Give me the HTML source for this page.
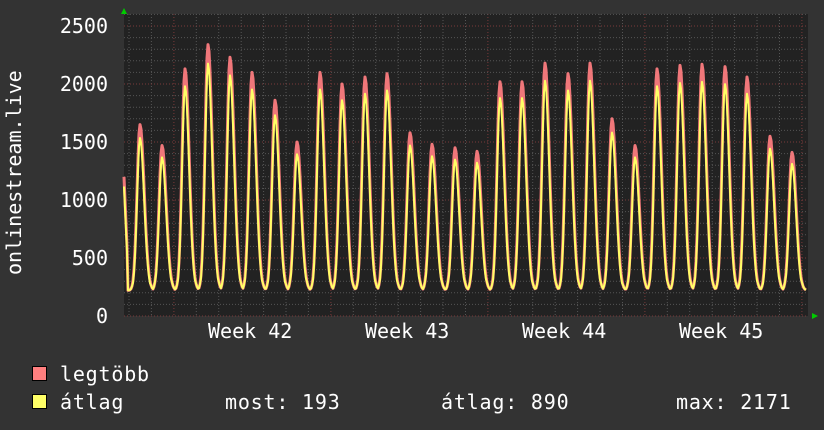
<!DOCTYPE html><html><head><style>
body{margin:0;background:#333;width:824px;height:430px;overflow:hidden;font-family:"DejaVu Sans Mono","Liberation Mono",monospace;color:#fff}
.t{position:absolute;font-size:20px;white-space:pre;line-height:20px}
.l{letter-spacing:0.8px}
.y{right:716px;text-align:right}
.sq{position:absolute;width:13px;height:13px;left:32px;border:1px solid #000}
</style></head><body>
<svg id="g" width="824" height="430" style="position:absolute;left:0;top:0">
<rect x="124" y="14" width="684" height="302" fill="#222"/>
<g id="grid"></g>
<path id="mx" fill="none" stroke="#f0777a" stroke-width="3" stroke-linejoin="round"/>
<path id="av" fill="none" stroke="#ffff66" stroke-width="2" stroke-linejoin="round"/>
<polygon points="121,14 127,14 124,8" fill="#0c0"/>
<polygon points="812,313 812,319 818,316" fill="#0c0"/>
</svg>
<div class="t y" style="top:16px">2500</div>
<div class="t y" style="top:74px">2000</div>
<div class="t y" style="top:132px">1500</div>
<div class="t y" style="top:190px">1000</div>
<div class="t y" style="top:248px">500</div>
<div class="t y" style="top:306px">0</div>
<div class="t" style="left:4px;top:275px;transform:rotate(-90deg);transform-origin:0 0;left:4px">onlinestream.live</div>
<div class="t" style="left:208px;top:321px">Week 42</div>
<div class="t" style="left:365px;top:321px">Week 43</div>
<div class="t" style="left:522px;top:321px">Week 44</div>
<div class="t" style="left:679px;top:321px">Week 45</div>
<div class="sq" style="top:366px;background:#ff7f7f"></div>
<div class="sq" style="top:394px;background:#ffff66"></div>
<div class="t l" style="left:60px;top:364px">legtöbb</div>
<div class="t l" style="left:60px;top:392px">átlag</div>
<div class="t l" style="left:225px;top:392px">most: 193</div>
<div class="t l" style="left:441px;top:392px">átlag: 890</div>
<div class="t l" style="left:676px;top:392px">max: 2171</div>
<script>
var g=document.getElementById('grid'),s='';
for(var x=129;x<808;x+=22.43){var r=((x-174)%157+157)%157;var maj=r<2||r>155;
s+='<line x1="'+x.toFixed(1)+'" y1="14" x2="'+x.toFixed(1)+'" y2="316" stroke="'+(maj?'#7a3a3a':'#555')+'" stroke-dasharray="1,2"/>';}
for(var v=0;v<=2600;v+=100){var y=316-v*0.116;if(y<14)break;var m=v%500==0;
s+='<line x1="124" y1="'+y.toFixed(1)+'" x2="808" y2="'+y.toFixed(1)+'" stroke="'+(m?'#7a3a3a':'#555')+'" stroke-dasharray="1,2"/>';}
g.innerHTML=s;
var pk=[[140,1650],[162,1470],[185,2130],[208,2340],[230,2230],[252,2100],[275,1860],[297,1500],[320,2100],[342,2000],[365,2060],[387,2090],[410,1580],[432,1480],[455,1450],[477,1420],[500,2020],[522,2020],[545,2180],[568,2090],[590,2180],[612,1700],[635,1470],[657,2130],[680,2160],[702,2170],[725,2150],[747,2060],[770,1550],[792,1410]];
function val(x){var best=220;for(var i=0;i<pk.length;i++){var d=(x-pk[i][0])/4.2;var v=220+(pk[i][1]-220)*Math.exp(-d*d*(d<0?1:0.5));if(v>best)best=v;}
if(x<128)best=Math.max(best,1200-(x-124)*200);if(x>795)best=Math.max(180,best);return best;}
var a='',b='';
for(var x=124;x<=806;x+=1){var v=val(x);a+=(x==124?'M':'L')+x+','+(316-(v>300?v*0.93:v)*0.116).toFixed(1);b+=(x==124?'M':'L')+x+','+(316-v*0.116).toFixed(1);}
document.getElementById('mx').setAttribute('d',b);document.getElementById('av').setAttribute('d',a);
</script>
</body></html>
